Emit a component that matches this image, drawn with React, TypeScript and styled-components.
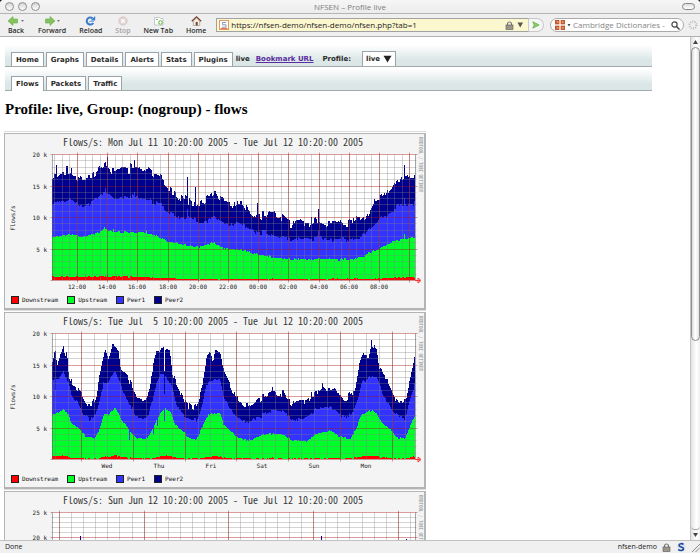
import React from "react";
import styled, { createGlobalStyle, css } from "styled-components";

const ui = `"Open Sans", "Noto Sans", sans-serif`;
const mono = `"Noto Sans Mono CJK SC", "Liberation Mono", monospace`;
const smallMono = `"DejaVu Sans Mono", monospace`;

const Global = createGlobalStyle`
  * { box-sizing: border-box; }
  body { margin: 0; background: #1c1c1c; }
  button, input, select { margin: 0; padding: 0; border: 0; background: none; font: inherit; color: inherit; outline: none; }
`;

const Window = styled.div`
  display: flex;
  flex-direction: column;
  height: 100vh;
  overflow: hidden;
  border-radius: 4px 4px 0 0;
  background: #fff;
  font-family: ${ui};
  color: #222;
`;

const TitleBar = styled.header`
  display: grid;
  grid-template-columns: 1fr auto 1fr;
  align-items: center;
  flex: none;
  height: 14px;
  padding: 0 5px;
  border-bottom: 1px solid #b4b4b4;
  background: linear-gradient(#f6f6f6, #ececec);
  font-size: 8px;
  line-height: 12px;
  color: #7c7c7c;
`;

const Lights = styled.div`
  display: flex;
  gap: 4px;
`;

const Light = styled.button`
  width: 9px;
  height: 9px;
  border: 1px solid #8e8e8e;
  border-radius: 50%;
  background: linear-gradient(#d4d4d4, #fff);
`;

const Pill = styled.button`
  justify-self: end;
  width: 13px;
  height: 7px;
  border: 1px solid #858585;
  border-radius: 4px;
  background: linear-gradient(#ddd, #fff);
`;

const Toolbar = styled.nav`
  display: flex;
  align-items: center;
  flex: none;
  height: 23px;
  padding: 0 2px 0 7px;
  border-bottom: 1px solid #b0b0b0;
  background: #efefef;
`;

const Actions = styled.div`
  display: flex;
  gap: 13px;
  margin-right: 10px;
`;

const Action = styled.button<{ $dim?: boolean }>`
  display: flex;
  flex-direction: column;
  align-items: center;
  font-size: 7px;
  font-weight: 600;
  line-height: 9px;
  white-space: nowrap;
  color: ${(p) => (p.$dim ? "#a3a3a3" : "#2c2c2c")};
`;

const AddressBar = styled.div`
  display: flex;
  align-items: center;
  flex: 1;
  min-width: 0;
  height: 14px;
  padding: 0 4px 0 2px;
  gap: 2px;
  border: 1px solid #a2a2a2;
  border-right-color: #ccc;
  background: #fbf7cf;
`;

const AddressInput = styled.input`
  flex: 1;
  min-width: 0;
  font-size: 8px;
  line-height: 12px;
  color: #1c1c1c;
`;

const GoButton = styled.button`
  display: flex;
  align-items: center;
  justify-content: center;
  width: 15px;
  height: 14px;
  margin-right: 6px;
  border: 1px solid #c8c8c8;
  border-left: 0;
  border-radius: 0 7px 7px 0;
  background: #f6f6f6;
`;

const SearchBox = styled.div`
  display: flex;
  align-items: center;
  width: 134px;
  height: 14px;
  padding: 0 3px 0 4px;
  gap: 2px;
  margin-right: 4px;
  border: 1px solid #aaa;
  border-radius: 7px;
  background: #fff;
`;

const SearchInput = styled.input`
  flex: 1;
  min-width: 0;
  font-size: 8px;
  line-height: 12px;
  &::placeholder { color: #858585; opacity: 1; }
`;

const Body = styled.div`
  display: flex;
  flex: 1;
  min-height: 0;
`;

const Page = styled.main`
  flex: 1;
  min-width: 0;
  overflow-x: hidden;
  overflow-y: auto;
  scrollbar-width: none;
  padding: 8px 38px 0 5px;
`;

const ScrollTrack = styled.div`
  display: flex;
  flex-direction: column;
  align-items: center;
  flex: none;
  width: 10px;
  border-left: 1px solid #c4c4c4;
  background: linear-gradient(90deg, #e2e2e2, #fff 60%, #f0f0f0);
`;

const ScrollArrow = styled.button`
  display: flex;
  align-items: center;
  justify-content: center;
  width: 9px;
  height: 10px;
`;

const ScrollWell = styled.div`
  flex: 1;
  width: 9px;
  border-bottom: 1px solid #a5a5a5;
  border-radius: 0 0 4px 4px;
`;

const ScrollThumb = styled.div`
  width: 9px;
  height: 61%;
  border: 1px solid #8d8d8d;
  border-radius: 5px;
  background: linear-gradient(90deg, #ddd, #fff 50%, #e2e2e2);
`;

const StatusBar = styled.footer`
  display: flex;
  align-items: center;
  flex: none;
  height: 13px;
  padding-left: 5px;
  gap: 5px;
  border-top: 1px solid #c0c0c0;
  background: #f0f0f0;
  font-size: 7px;
  line-height: 10px;
`;

const StatusText = styled.span<{ $grow?: boolean }>`
  ${(p) => p.$grow && css`flex: 1;`}
  font-weight: 500;
`;

const TabBar = styled.nav`
  display: flex;
  align-items: flex-end;
  height: 22px;
  margin-bottom: 2px;
  padding-left: 6px;
  gap: 2px;
  border-bottom: 1px solid #a2aaaa;
  background: linear-gradient(#fff, #dce7e7 70%, #dbe5e5);
  font-family: "DejaVu Sans", sans-serif;
  font-size: 7px;
  font-weight: 700;
  line-height: 12px;
  color: #2a2a2a;
`;

const Tab = styled.a<{ $active?: boolean }>`
  height: ${(p) => (p.$active ? "15px" : "14px")};
  margin-bottom: ${(p) => (p.$active ? "-1px" : "0")};
  padding: 1px 4px 0;
  border: 1px solid #9aa2ac;
  border-bottom: 0;
  background: #fff;
  color: inherit;
  text-decoration: none;
`;

const BarText = styled.span`
  height: 14px;
  padding-top: 1px;
  margin-left: 1px;
`;

const Bookmark = styled.a`
  height: 14px;
  padding-top: 1px;
  margin: 0 7px 0 4px;
  color: #5a2ca0;
`;

const ProfileLabel = styled.label`
  height: 14px;
  padding-top: 1px;
`;

const ProfilePicker = styled.div`
  display: flex;
  align-items: center;
  height: 15px;
  margin-left: 9px;
  padding: 0 3px;
  gap: 2px;
  border: 1px solid #9aa2ac;
  border-bottom: 0;
  background: #fff;
`;

const ProfileSelect = styled.select`
  appearance: none;
  line-height: 12px;
`;

const Heading = styled.h1`
  margin: 9px 0 15px;
  font-family: "Liberation Serif", serif;
  font-size: 15px;
  font-weight: 700;
  line-height: 18px;
  color: #000;
`;

const Panel = styled.figure`
  display: grid;
  grid-template-columns: auto 7px;
  width: fit-content;
  margin: 0 0 2px -1px;
  border: solid #b4b4b4;
  border-width: 1px 2px 2px 1px;
  box-shadow: 0 -1px #fff, 0 -2px #dcdcdc;
  background: #f4f4f4;
  font-family: ${mono};
  color: #3a3a3a;
`;

const Caption = styled.figcaption`
  padding: 2px 0 2px 58px;
  font-size: 10px;
  line-height: 12px;
  white-space: pre;
`;

const Credit = styled.div`
  grid-column: 2;
  grid-row: 1 / span 3;
  padding-top: 3px;
  writing-mode: vertical-rl;
  font-size: 5px;
  line-height: 6px;
  white-space: nowrap;
  color: #8c8c8c;
`;

const Plot = styled.svg`
  display: block;
  overflow: visible;
  font-family: ${smallMono};
  font-size: 6px;
`;

const Legend = styled.ul`
  display: flex;
  gap: 9px;
  margin: 0;
  padding: 3px 0 3px 6px;
  list-style: none;
  font-family: ${smallMono};
  font-size: 6px;
  line-height: 10px;
  color: #111;
`;

const LegendItem = styled.li<{ $color: string }>`
  display: flex;
  align-items: center;
  gap: 3px;
  &::before {
    content: "";
    width: 6px;
    height: 6px;
    border: 1px solid #222;
    background: ${(p) => p.$color};
  }
`;

type Points = [number, number][];

const colors = { down: "#ff0000", up: "#00ff2a", peer1: "#3333ff", peer2: "#00008f" };
const series = [
  { name: "Downstream", color: colors.down },
  { name: "Upstream", color: colors.up },
  { name: "Peer1", color: colors.peer1 },
  { name: "Peer2", color: colors.peer2 },
];

const LEFT = 47;
const TOP = 4;
const WIDTH = 363;
const HEIGHT = 126;

/* Control points are [thirds of a column, thousands of flows]. */
const at = (pts: Points, x: number) => {
  const i = pts.findIndex((p) => p[0] >= x);
  if (i < 0) return pts[pts.length - 1][1];
  if (i === 0) return pts[0][1];
  const [x0, y0] = pts[i - 1];
  const [x1, y1] = pts[i];
  return y0 + ((y1 - y0) * (x - x0)) / (x1 - x0);
};

const random = (seed: number) => () => {
  seed = (seed * 1664525 + 1013904223) % 4294967296;
  return seed / 4294967296;
};

const area = (pts: Points, max: number, noise: number, seed: number, spikes: Points = []) => {
  const rnd = random(seed);
  const base = TOP + HEIGHT;
  let d = `M${LEFT} ${base}`;
  let jitter = 0;
  for (let c = 0; c < WIDTH; c++) {
    const r = rnd();
    if (c % 2 === 0 || r > 0.75) jitter = (rnd() - 0.4) * noise * (rnd() > 0.8 ? 2 : 1);
    let v = at(pts, 157 + c * 3) + jitter;
    spikes.forEach(([sx, sv]) => {
      if (Math.round((sx - 157) / 3) === c) v = sv;
    });
    d += `V${(base - (Math.max(v, 0) * HEIGHT) / max).toFixed(1)}h1`;
  }
  return `${d}V${base}Z`;
};

const day = {
  peer2: [[157,16.2],[180,16.7],[210,17.2],[235,16],[250,15.7],[275,16.3],[295,17.5],[320,18.5],[335,17.2],[365,17.7],[400,17.3],[430,17.6],[450,17.2],[470,16.4],[490,15.4],[505,14.3],[520,13.8],[535,12.6],[555,13.2],[575,12.1],[590,11.9],[610,12.4],[630,13.2],[645,13.9],[665,12.7],[685,12],[705,11.8],[725,12.5],[745,10.8],[765,10.2],[795,9.8],[810,10.8],[845,10],[875,8.8],[900,9],[925,8.6],[945,9.4],[970,8.9],[995,9.2],[1020,9],[1045,8.7],[1065,9.7],[1085,9.3],[1105,10.7],[1120,12.3],[1145,13.2],[1165,14],[1190,15.7],[1220,16.3],[1245,16.7]] as Points,
  peer1: [[157,12.1],[210,12.6],[235,12],[265,11.9],[290,13],[315,13.9],[340,12.9],[380,13.1],[430,13.1],[470,12.2],[505,10.8],[540,9.8],[563,10],[590,9.2],[620,9.3],[640,10.1],[660,9.3],[685,8.8],[725,8.9],[765,7.6],[815,7.3],[845,6.8],[875,6.5],[945,6.4],[955,7],[970,6.4],[1045,6.3],[1085,6.7],[1115,8.5],[1145,9.8],[1175,11],[1200,11.8],[1245,12]] as Points,
  up: [[157,6.8],[210,7.2],[250,6.8],[290,7.4],[315,8],[350,7.5],[430,7.6],[470,7],[505,6.1],[560,5.5],[600,5.2],[640,5.9],[670,5],[725,4.8],[775,4],[815,3.6],[875,3.3],[945,3.3],[1045,3.2],[1085,3.5],[1115,4.5],[1145,5.2],[1175,6],[1205,6.5],[1245,6.7]] as Points,
  down: [[157,0.5],[315,0.6],[470,0.4],[560,0.15],[1085,0.15],[1150,0.2],[1180,0.4],[1245,0.45]] as Points,
};

const week = {
  peer2: [[157,15.5],[165,17],[172,15],[180,16.5],[190,17.6],[200,16],[208,13],[215,12],[235,11],[250,9.5],[262,8.2],[275,8.5],[290,10],[298,13],[308,16],[318,17.3],[325,16],[335,17.9],[345,17.9],[355,17],[362,14],[375,13.5],[385,13],[392,11.5],[400,10.5],[410,9.3],[425,9.4],[440,9.5],[450,11],[460,15.5],[470,17],[480,16.5],[490,17.4],[508,17.4],[515,14],[530,11.5],[545,10],[560,8.7],[580,8],[590,8.5],[605,11],[615,15],[628,16.8],[638,15.5],[647,17.3],[658,17.3],[667,14.5],[685,12.2],[700,10.5],[720,9],[745,8.3],[770,9.3],[790,9.5],[815,10.7],[835,10.3],[850,10.5],[860,9.3],[885,8.7],[915,9],[945,10.2],[970,11.4],[990,11],[1005,11],[1020,9.8],[1035,9.2],[1060,10.5],[1070,12],[1080,15.5],[1095,17],[1103,16],[1113,18.1],[1130,17.4],[1137,14.5],[1155,13],[1170,11.5],[1185,9.5],[1205,8.9],[1220,9.5],[1230,13],[1245,16.7]] as Points,
  peer1: [[157,12.5],[175,12.5],[190,13.9],[205,12],[215,9.8],[235,8.8],[250,7.3],[270,6.2],[285,6.8],[300,9.5],[310,12],[325,12],[345,14],[360,12],[375,9.8],[395,8],[405,6.8],[430,6.5],[445,7],[455,9],[465,11.5],[480,13],[495,13.4],[515,11.5],[530,8.5],[550,7],[570,6.1],[590,6],[605,8.5],[620,12],[640,12.5],[660,12.6],[670,10],[690,8],[710,6.5],[745,5.8],[765,6.5],[795,7],[820,8],[850,7.5],[865,6.8],[885,6.1],[920,6.5],[945,7.8],[990,8.3],[1010,7.5],[1030,6.5],[1055,7],[1070,9],[1085,12],[1100,12.5],[1115,13.3],[1130,13],[1145,10.5],[1170,8.5],[1190,6.8],[1215,6.5],[1225,8.5],[1245,12]] as Points,
  up: [[157,7],[190,7.8],[205,7],[215,5.5],[240,4.7],[260,3.4],[285,3.3],[300,5],[312,7],[325,7],[345,8.2],[360,6.5],[375,5.5],[395,4],[410,3.3],[440,3.2],[455,4.5],[480,7.3],[495,8],[512,7.5],[525,5.5],[550,4.3],[570,3.2],[590,3.1],[610,5.5],[625,7],[660,7.3],[670,5.5],[690,4.5],[710,3.5],[745,2.9],[765,3.3],[785,3.8],[820,4],[850,3.9],[875,3],[920,2.8],[945,3.9],[990,4.4],[1025,3.4],[1050,3.1],[1070,5],[1085,7],[1115,7.7],[1130,7.3],[1145,5.7],[1170,4.8],[1190,3.4],[1215,3.3],[1245,7]] as Points,
  down: [] as Points,
};
week.down = week.up.map(([x, v]) => [x, Math.max(0.1, (v - 4) * 0.13)]);

const daySpikes = {
  peer2: [[168,18.2],[404,19],[323,19.5],[563,16.4],[585,14.7],[773,12.3],[955,11.2],[1212,18.3]] as Points,
  peer1: [[315,14.6],[404,13.9],[563,11.2],[955,7.8],[1212,13]] as Points,
  up: [[314,8.5],[339,8.1],[1212,7.3]] as Points,
};
const weekSpikes = {
  peer2: [[818,11.5],[967,12.1],[1113,18.9],[494,14]] as Points,
  peer1: [[166,11],[494,10.3]] as Points,
  up: [[388,3],[461,4],[472,5.3],[494,6]] as Points,
};

type ChartProps = {
  title: string;
  max: number;
  data?: typeof day;
  spikes?: { peer2: Points; peer1: Points; up: Points };
  majorStart: number;
  majorStep: number;
  minorStep: number;
  labels: string[];
  labelStart: number;
  noise: number;
};

const ticks = (start: number, step: number) => {
  const out: number[] = [];
  let x = start;
  while (x - step > LEFT) x -= step;
  for (; x < LEFT + WIDTH; x += step) out.push(Math.round(x));
  return out;
};

function Chart({ title, max, data, spikes, majorStart, majorStep, minorStep, labels, labelStart, noise }: ChartProps) {
  const base = TOP + HEIGHT;
  const right = LEFT + WIDTH;
  const rows = Array.from({ length: max + 1 }, (_, i) => i);
  const yOf = (v: number) => Math.round(base - (v * HEIGHT) / max);
  const minor = ticks(majorStart, minorStep).map((x) => `M${x} ${TOP}V${base}`).join("");
  const minorRows = rows.filter((v) => v % 5).map((v) => `M${LEFT - 1} ${yOf(v)}H${right + 1}`).join("");
  const major = ticks(majorStart, majorStep).map((x) => `M${x} ${TOP - 2}V${base + 2}`).join("");
  const majorRows = rows.filter((v) => v % 5 === 0).map((v) => `M${LEFT - 2} ${yOf(v)}H${right + 2}`).join("");
  return (
    <Panel>
      <Caption>{title}</Caption>
      <Plot width="412" height="142" viewBox="0 0 412 142" role="img" aria-label={title}>
        <rect x={LEFT} y={TOP} width={WIDTH} height={HEIGHT} fill="#fff" />
        {data && (
          <g shapeRendering="crispEdges">
            <path fill={colors.peer2} d={area(data.peer2, max, noise, 11, spikes?.peer2)} />
            <path fill={colors.peer1} d={area(data.peer1, max, noise * 0.5, 23, spikes?.peer1)} />
            <path fill={colors.up} d={area(data.up, max, noise * 0.25, 37, spikes?.up)} />
            <path fill={colors.down} d={area(data.down, max, 0.15, 51)} />
          </g>
        )}
        {!data && <path stroke={colors.peer2} d="M75.5 28v102M316.5 28v102M401.5 31v99" />}
        <g fill="none" transform="translate(.5 .5)">
          <path stroke="#808080" strokeOpacity=".34" d={minor + minorRows} />
          <path stroke="#a01818" strokeOpacity=".42" d={major + majorRows} />
          <path stroke="#555" strokeOpacity=".5" d={`M${LEFT} ${TOP}V${base}M${right} ${TOP}V${base}`} />
        </g>
        <path fill="none" stroke="#f33" d={`M${right} ${base + 0.5}h5m-2-2.5l3 2.5-3 2.5z`} />
        <g textAnchor="end" fill="#222">
          {rows.filter((v) => v && v % 5 === 0).map((v) => (
            <text key={v} x="42" y={yOf(v) + 3}>{`${v} k`}</text>
          ))}
        </g>
        <text transform="rotate(-90)" x={-68} y="10" textAnchor="middle" fill="#222">Flows/s</text>
        <g textAnchor="middle" fill="#222">
          {labels.map((l, i) => (
            <text key={l} x={Math.round(labelStart + i * majorStep)} y="139">{l}</text>
          ))}
        </g>
      </Plot>
      <Legend>
        {series.map((s) => (
          <LegendItem key={s.name} $color={s.color}>{s.name}</LegendItem>
        ))}
      </Legend>
      <Credit>RRDTOOL / TOBI OETIKER</Credit>
    </Panel>
  );
}

const Arrow = ({ flip }: { flip?: boolean }) => (
  <svg width="18" height="10" viewBox="0 0 18 10">
    <path
      d={flip ? "M12 5L7 .5v2.500H2.500v4H7v2.500z" : "M1 5L6 .5v2.500h4.500v4H6v2.500z"}
      fill="#86c25e"
      stroke="#6aa84c"
      strokeWidth=".6"
    />
    <path d="M14 4h3l-1.500 2z" fill="#777" />
  </svg>
);

const Lock = () => (
  <svg width="9" height="9" viewBox="0 0 9 9">
    <path d="M2.500 4.500V3a2 2 0 0 1 4 0v1.500" fill="none" stroke="#777" strokeWidth="1.200" />
    <rect x="1" y="4" width="7" height="4.500" fill="#999" stroke="#555" strokeWidth=".6" />
    <path d="M2.500 6.200h1m1 0h1m1 0h1" stroke="#b08b2c" />
  </svg>
);

export default function App() {
  return (
    <>
      <Global />
      <Window>
        <TitleBar>
          <Lights>
            <Light aria-label="Close" />
            <Light aria-label="Minimize" />
            <Light aria-label="Zoom" />
          </Lights>
          <span>NFSEN – Profile live</span>
          <Pill aria-label="Toggle toolbar" />
        </TitleBar>
        <Toolbar>
          <Actions>
            <Action><Arrow />Back</Action>
            <Action><Arrow flip />Forward</Action>
            <Action>
              <svg width="11" height="10" viewBox="0 0 11 10">
                <path d="M8.300 7A3.600 3.600 0 1 1 7.600 2.200" fill="none" stroke="#3a7cc8" strokeWidth="2" />
                <path d="M10.200 0v4.600H5.600z" fill="#3a7cc8" />
                <path d="M4 5.500h5" stroke="#7fb4e8" />
              </svg>
              Reload
            </Action>
            <Action $dim disabled>
              <svg width="10" height="10" viewBox="0 0 10 10">
                <circle cx="5" cy="5" r="4.200" fill="#e3d3d3" stroke="#cdbfbf" strokeWidth=".6" />
                <path d="M3.300 3.300l3.400 3.400m0-3.400L3.300 6.700" stroke="#fff" strokeWidth="1.300" />
              </svg>
              Stop
            </Action>
            <Action>
              <svg width="11" height="10" viewBox="0 0 11 10">
                <path d="M1.500 1.500h5l1 1h2.500v6.500H1.500z" fill="#fff" stroke="#a9b4b9" strokeWidth=".7" />
                <circle cx="7.500" cy="6.500" r="2.300" fill="#79c25c" />
                <path d="M6 6.500h3M7.500 5v3" stroke="#fff" strokeWidth=".8" />
                <path d="M3 3.500h2" stroke="#79c25c" />
              </svg>
              New Tab
            </Action>
            <Action>
              <svg width="11" height="10" viewBox="0 0 11 10">
                <path d="M2.300 5v4.500h6.400V5L5.500 2z" fill="#f3ece2" stroke="#8a7a6c" strokeWidth=".5" />
                <path d="M.8 5.300L5.500.9l4.700 4.400" fill="none" stroke="#7d4433" strokeWidth="1.300" />
                <path d="M4.700 6h2v3.500h-2z" fill="#6e4a35" />
              </svg>
              Home
            </Action>
          </Actions>
          <AddressBar>
            <svg width="10" height="10" viewBox="0 0 10 10">
              <rect x=".5" y=".5" width="9" height="9" fill="#fff" stroke="#e39a6a" />
              <path d="M7 2.500H3.500v2.300H7v2.400H3" fill="none" stroke="#8f95b8" />
              <path d="M1.500 8.500h7" stroke="#e8763a" />
            </svg>
            <AddressInput aria-label="Address" defaultValue="https://nfsen-demo/nfsen-demo/nfsen.php?tab=1" />
            <Lock />
            <svg width="8" height="6" viewBox="0 0 8 6"><path d="M1.500 .5h5.500L4.200 5.500z" fill="#555" /></svg>
          </AddressBar>
          <GoButton aria-label="Go">
            <svg width="8" height="8" viewBox="0 0 8 8"><path d="M.8.8L7.200 4 .8 7.200 2.200 4z" fill="#8fd06e" stroke="#58a83a" strokeWidth=".7" /></svg>
          </GoButton>
          <SearchBox>
            <svg width="10" height="10" viewBox="0 0 10 10">
              <rect width="10" height="10" fill="#c4552d" />
              <path d="M5 0v10M0 5h10" stroke="#f6e8dd" strokeWidth="1.500" />
              <path d="M1.500 2h2M6.700 2h2M1.500 8h2M6.700 8h2" stroke="#f0c8a8" />
            </svg>
            <svg width="4" height="4" viewBox="0 0 4 4"><path d="M.5 1h3L2 3.500z" fill="#444" /></svg>
            <SearchInput aria-label="Search" placeholder="Cambridge Dictionaries -" />
            <svg width="9" height="9" viewBox="0 0 9 9">
              <circle cx="3.500" cy="3.500" r="2.600" fill="none" stroke="#444" strokeWidth="1.200" />
              <path d="M5.500 5.500L8.500 8.500" stroke="#444" strokeWidth="1.500" />
            </svg>
          </SearchBox>
          <svg width="10" height="10" viewBox="0 0 10 10">
            <circle cx="5" cy="5" r="3.500" fill="none" stroke="#b8b8b8" strokeWidth="2" strokeDasharray="1 1.200" />
          </svg>
        </Toolbar>
        <Body>
          <Page>
            <TabBar>
              <Tab href="#home">Home</Tab>
              <Tab href="#graphs" $active>Graphs</Tab>
              <Tab href="#details">Details</Tab>
              <Tab href="#alerts">Alerts</Tab>
              <Tab href="#stats">Stats</Tab>
              <Tab href="#plugins">Plugins</Tab>
              <BarText>live</BarText>
              <Bookmark href="#bookmark">Bookmark URL</Bookmark>
              <ProfileLabel htmlFor="profile">Profile:</ProfileLabel>
              <ProfilePicker>
                <ProfileSelect id="profile" defaultValue="live">
                  <option value="live">live</option>
                </ProfileSelect>
                <svg width="9" height="8" viewBox="0 0 9 8"><path d="M.5 .8h8L4.500 7.500z" fill="#222" /></svg>
              </ProfilePicker>
            </TabBar>
            <TabBar>
              <Tab href="#flows" $active>Flows</Tab>
              <Tab href="#packets">Packets</Tab>
              <Tab href="#traffic">Traffic</Tab>
            </TabBar>
            <Heading>Profile: live, Group: (nogroup) - flows</Heading>
            <Chart
              title="Flows/s: Mon Jul 11 10:20:00 2005 - Tue Jul 12 10:20:00 2005"
              max={20}
              data={day}
              spikes={daySpikes}
              majorStart={72}
              majorStep={30.2}
              minorStep={7.55}
              labels={["12:00", "14:00", "16:00", "18:00", "20:00", "22:00", "00:00", "02:00", "04:00", "06:00", "08:00"]}
              labelStart={72}
              noise={1}
            />
            <Chart
              title="Flows/s: Tue Jul  5 10:20:00 2005 - Tue Jul 12 10:20:00 2005"
              max={20}
              data={week}
              spikes={weekSpikes}
              majorStart={76}
              majorStep={51.8}
              minorStep={12.95}
              labels={["Wed", "Thu", "Fri", "Sat", "Sun", "Mon"]}
              labelStart={102}
              noise={0.8}
            />
            <Chart
              title="Flows/s: Sun Jun 12 10:20:00 2005 - Tue Jul 12 10:20:00 2005"
              max={25}
              majorStart={54}
              majorStep={84.7}
              minorStep={12.1}
              labels={[]}
              labelStart={96}
              noise={0}
            />
          </Page>
          <ScrollTrack>
            <ScrollArrow aria-label="Scroll up">
              <svg width="5" height="4" viewBox="0 0 5 4"><path d="M0 4h5L2.500 0z" fill="#444" /></svg>
            </ScrollArrow>
            <ScrollWell><ScrollThumb /></ScrollWell>
            <ScrollArrow aria-label="Scroll down">
              <svg width="5" height="4" viewBox="0 0 5 4"><path d="M0 0h5L2.500 4z" fill="#444" /></svg>
            </ScrollArrow>
          </ScrollTrack>
        </Body>
        <StatusBar>
          <StatusText $grow>Done</StatusText>
          <StatusText>nfsen-demo</StatusText>
          <Lock />
          <svg width="10" height="10" viewBox="0 0 10 10">
            <circle cx="5.500" cy="5" r="4.300" fill="#dde3ee" />
            <path d="M7.500 2.500C6.500 1.300 3 1.300 3 3.300S7.500 4.800 7.500 6.800 3.500 9 2.300 7.500" fill="none" stroke="#1c4a9c" strokeWidth="1.600" />
          </svg>
          <svg width="9" height="10" viewBox="0 0 9 10"><path d="M1 10L9 2M4.500 10L9 5.500" stroke="#8c8c8c" /></svg>
        </StatusBar>
      </Window>
    </>
  );
}
